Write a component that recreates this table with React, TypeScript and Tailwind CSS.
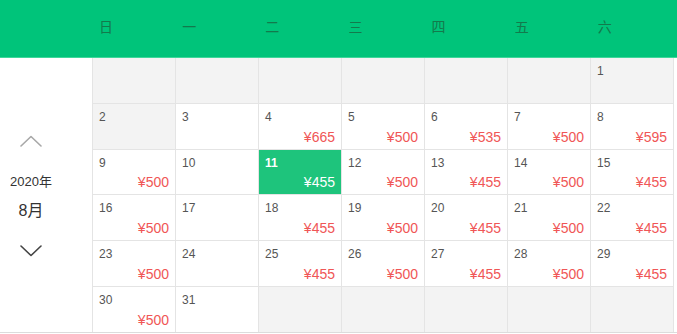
const weekdays = ["日", "一", "二", "三", "四", "五", "六"];

type Day = { d: number; price?: string; past?: boolean; active?: boolean } | null;

const prices: Record<number, string> = {
  4: "665", 5: "500", 6: "535", 7: "500", 8: "595",
  9: "500", 11: "455", 12: "500", 13: "455", 14: "500", 15: "455",
  16: "500", 18: "455", 19: "500", 20: "455", 21: "500", 22: "455",
  23: "500", 25: "455", 26: "500", 27: "455", 28: "500", 29: "455",
  30: "500",
};

const cells: Day[] = [
  ...Array(6).fill(null),
  ...Array.from({ length: 31 }, (_, i) => {
    const d = i + 1;
    return { d, price: prices[d], past: d <= 2, active: d === 11 };
  }),
];
while (cells.length < 42) cells.push(null);

const Chevron = ({ up, color }: { up?: boolean; color: string }) => (
  <svg width="22" height="12" viewBox="0 0 22 12" fill="none">
    <path
      d={up ? "M1 11L11 1.5L21 11" : "M1 1L11 10.5L21 1"}
      stroke={color}
      strokeWidth="1.6"
      strokeLinecap="round"
      strokeLinejoin="round"
    />
  </svg>
);

export default function App() {
  return (
    <div className="w-[677px] h-[334px] bg-white overflow-hidden font-['Liberation_Sans','Noto_Sans_CJK_SC',sans-serif]">
      <div className="h-[58px] bg-[#00c47a] flex border-b border-[#3ed79a]">
        <div className="w-[92px]" />
        <div className="w-[582px] grid grid-cols-7">
          {weekdays.map((w) => (
            <div key={w} className="pl-[7px] pt-[17px] text-[14px] text-[#137a4c]">
              {w}
            </div>
          ))}
        </div>
      </div>
      <div className="flex border-b border-[#dcdcdc]">
        <div className="w-[92px] flex">
          <div className="w-[62px] flex flex-col items-center pt-[77px]">
            <Chevron up color="#a8a8a8" />
            <div className="mt-[28px] text-[13px] leading-none text-[#333]">2020年</div>
            <div className="mt-[15px] text-[16px] leading-none text-[#333]">8月</div>
            <div className="mt-[26px]">
              <Chevron color="#444" />
            </div>
          </div>
        </div>
        <div className="w-[582px] grid grid-cols-7 grid-rows-[46px_46px_45px_46px_46px_45px] border-l border-[#e4e4e4]">
          {cells.map((c, i) => {
            const bg = !c || c.past ? "bg-[#f3f3f3]" : c.active ? "bg-[#1ec47c]" : "bg-white";
            return (
              <div
                key={i}
                className={`relative border-r border-b border-[#e4e4e4] ${bg} ${i >= 35 ? "border-b-0" : ""}`}
              >
                {c && (
                  <>
                    <div
                      className={`absolute left-[6px] top-[7px] text-[12px] leading-none ${
                        c.active ? "text-white font-bold" : "text-[#555]"
                      }`}
                    >
                      {c.d}
                    </div>
                    {c.price && (
                      <div
                        className={`absolute right-[6px] bottom-[5px] text-[14px] leading-none ${
                          c.active ? "text-white" : "text-[#f05656]"
                        }`}
                      >
                        ¥{c.price}
                      </div>
                    )}
                  </>
                )}
              </div>
            );
          })}
        </div>
      </div>
    </div>
  );
}
